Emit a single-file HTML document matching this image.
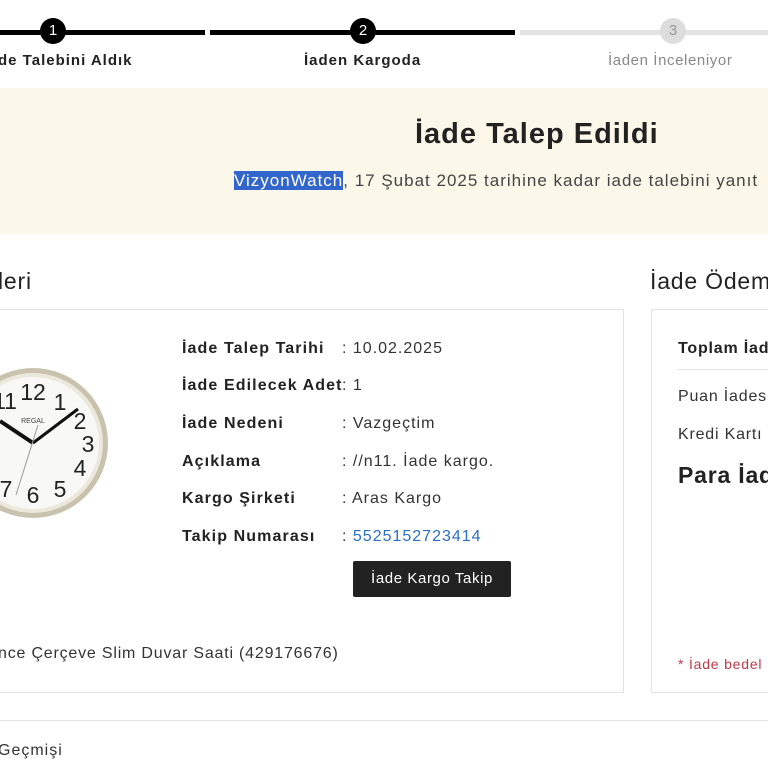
<!DOCTYPE html>
<html><head><meta charset="utf-8"><style>
body{margin:0;width:768px;height:768px;overflow:hidden;background:#fff;font-family:"Liberation Sans",sans-serif;color:#222;position:relative;letter-spacing:0.8px}
.a{position:absolute;white-space:nowrap}
.c{position:absolute;width:26px;height:26px;border-radius:50%;background:#000;color:#fff;font-size:15px;text-align:center;line-height:26px;letter-spacing:0}
.lbl{font-size:15px;font-weight:bold;color:#222;letter-spacing:1px}
.k{font-size:16px;font-weight:bold;color:#222;letter-spacing:1.1px}
.v{font-size:16px;color:#333;letter-spacing:1px}
</style></head><body>
<div class="a" style="left:0;top:30px;width:205px;height:5px;background:#000"></div>
<div class="a" style="left:210px;top:30px;width:305px;height:5px;background:#000"></div>
<div class="a" style="left:520px;top:30px;width:248px;height:5px;background:#e3e3e3"></div>
<div class="c" style="left:40px;top:18px">1</div>
<div class="c" style="left:350px;top:18px">2</div>
<div class="c" style="left:660px;top:18px;background:#ddd;color:#999">3</div>
<div class="a lbl" style="left:-2px;top:52px">de Talebini Aldık</div>
<div class="a lbl" style="left:304px;top:52px">İaden Kargoda</div>
<div class="a" style="left:608px;top:52px;font-size:15px;color:#888;letter-spacing:0.6px">İaden İnceleniyor</div>
<div class="a" style="left:0;top:88px;width:768px;height:146px;background:#fcf8e9"></div>
<div class="a" style="left:415px;top:118px;font-size:29px;font-weight:bold;color:#222;letter-spacing:1px">İade Talep Edildi</div>
<div class="a" style="left:234px;top:171px;font-size:17px;color:#444;letter-spacing:1px"><span style="background:#3366cc;color:#fff">VizyonWatch</span>, 17 Şubat 2025 tarihine kadar iade talebini yanıt</div>
<div class="a" style="left:-2px;top:268px;font-size:23px;color:#222">leri</div>
<div class="a" style="left:650px;top:268px;font-size:23px;color:#222">İade Ödem</div>
<div class="a" style="left:-2px;top:309px;width:624px;height:382px;border:1px solid #e2e2e2"></div>
<div class="a" style="left:651px;top:309px;width:130px;height:382px;border:1px solid #e2e2e2"></div>
<svg class="a" style="left:0;top:365px;letter-spacing:0" width="115" height="160" viewBox="0 0 115 160">
<circle cx="33" cy="78" r="75" fill="#c9c2ae"/><circle cx="33" cy="78" r="70" fill="#ece8dc"/><circle cx="33" cy="78" r="66" fill="#f8f8f6"/>
<g font-family="Liberation Sans" font-size="23" fill="#222" text-anchor="middle">
<text x="33" y="35">12</text><text x="60" y="45">1</text><text x="80" y="64">2</text><text x="88" y="87">3</text><text x="80" y="111">4</text><text x="60" y="132">5</text><text x="33" y="138">6</text><text x="6" y="132">7</text><text x="5" y="44">11</text></g>
<text x="33" y="58" font-size="7" text-anchor="middle" fill="#444" font-family="Liberation Sans">REGAL</text>
<line x1="33" y1="78" x2="0" y2="56" stroke="#111" stroke-width="4"/>
<line x1="33" y1="78" x2="78" y2="44" stroke="#111" stroke-width="3"/>
<line x1="38" y1="60" x2="16" y2="130" stroke="#999" stroke-width="1"/>
</svg>
<div class="a k" style="left:182px;top:340px">İade Talep Tarihi</div><div class="a v" style="left:342px;top:340px">: 10.02.2025</div>
<div class="a k" style="left:182px;top:377px">İade Edilecek Adet</div><div class="a v" style="left:342px;top:377px">: 1</div>
<div class="a k" style="left:182px;top:415px">İade Nedeni</div><div class="a v" style="left:342px;top:415px">: Vazgeçtim</div>
<div class="a k" style="left:182px;top:453px">Açıklama</div><div class="a v" style="left:342px;top:453px">: //n11. İade kargo.</div>
<div class="a k" style="left:182px;top:490px">Kargo Şirketi</div><div class="a v" style="left:342px;top:490px">: Aras Kargo</div>
<div class="a k" style="left:182px;top:528px">Takip Numarası</div><div class="a v" style="left:342px;top:528px">: <span style="color:#2a6fc0">5525152723414</span></div>
<div class="a" style="left:353px;top:561px;width:158px;height:36px;background:#222;color:#fff;font-size:15px;text-align:center;line-height:36px;border-radius:2px;letter-spacing:0.6px">İade Kargo Takip</div>
<div class="a v" style="left:-2px;top:645px;letter-spacing:0.8px">nce Çerçeve Slim Duvar Saati (429176676)</div>
<div class="a" style="left:678px;top:340px;font-size:16px;font-weight:bold">Toplam İad</div>
<div class="a" style="left:678px;top:369px;width:100px;height:1px;background:#e2e2e2"></div>
<div class="a" style="left:678px;top:388px;font-size:16px;color:#333">Puan İades</div>
<div class="a" style="left:678px;top:426px;font-size:16px;color:#333">Kredi Kartı</div>
<div class="a" style="left:678px;top:462px;font-size:23px;font-weight:bold">Para İad</div>
<div class="a" style="left:678px;top:656px;font-size:14px;color:#c0394a">* İade bedel</div>
<div class="a" style="left:0;top:720px;width:768px;height:1px;background:#e2e2e2"></div>
<div class="a v" style="left:-2px;top:742px">Geçmişi</div>
</body></html>
